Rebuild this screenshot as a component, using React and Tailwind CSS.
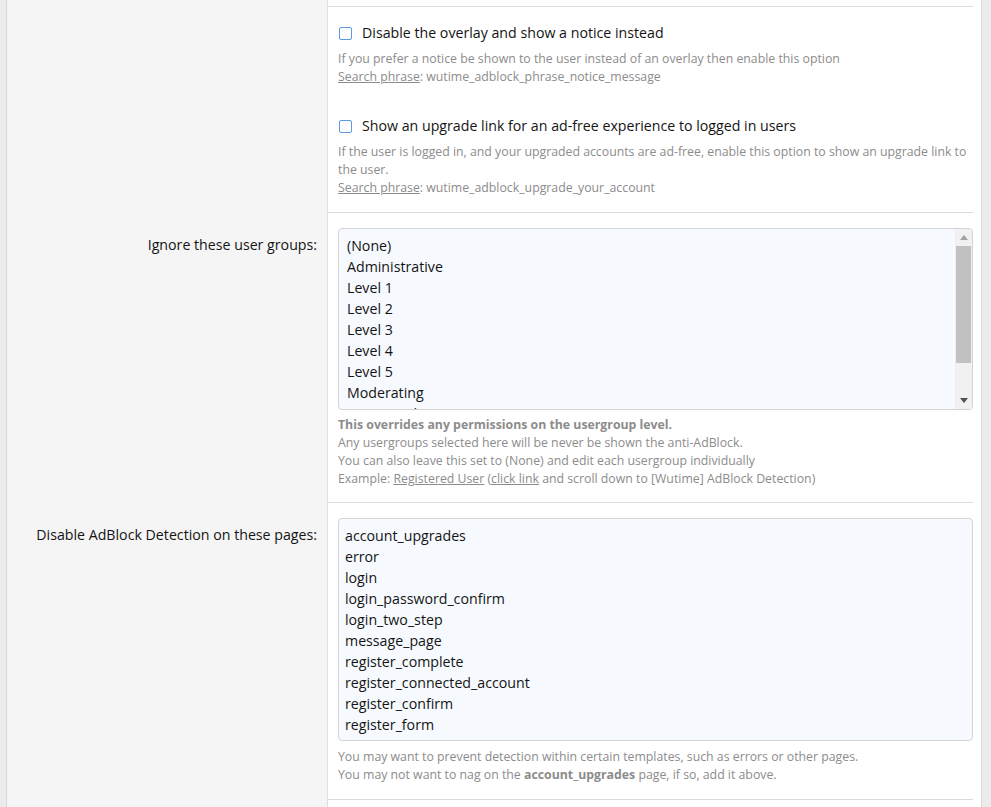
import React from 'react';

const groups = ['(None)', 'Administrative', 'Level 1', 'Level 2', 'Level 3', 'Level 4', 'Level 5', 'Moderating', 'Registered'];

const pages = [
    'account_upgrades',
    'error',
    'login',
    'login_password_confirm',
    'login_two_step',
    'message_page',
    'register_complete',
    'register_connected_account',
    'register_confirm',
    'register_form',
];

function Checkbox({ label, children }) {
    return (
        <div>
            <label className="flex items-center leading-[20px] text-[14.2px] text-[#141414]">
                <span className="w-[13px] h-[13px] border-[1.5px] border-[#5b9be0] rounded-[2px] bg-white ml-[1px] mr-[10px] shrink-0"></span>
                {label}
            </label>
            <div className="mt-[7px] text-[12.3px] leading-[18px] text-[#8c8c8c]">{children}</div>
        </div>
    );
}

function Row({ label, children, className = '' }) {
    return (
        <div className="flex">
            <div className="w-[321px] shrink-0 bg-[#f5f5f5] border-r border-[#dfdfdf] pr-[10px] text-right text-[14.2px] leading-[20px] text-[#141414] pt-[23px]">
                {label}
            </div>
            <div className={`flex-1 mr-[8px] border-t border-[#dcdcdc] pl-[10px] ${className}`}>{children}</div>
        </div>
    );
}

export default function App() {
    return (
        <div className="min-h-screen bg-[#ececec] pl-[6px] pr-[9px]" style={{ fontFamily: '"Open Sans", "Noto Sans", sans-serif' }}>
            <div className="min-h-screen flex flex-col border-l border-r border-[#d8d8d8] bg-white">
                {/* top spacer */}
                <div className="flex h-[6px]">
                    <div className="w-[321px] bg-[#f5f5f5] border-r border-[#dfdfdf]"></div>
                    <div className="flex-1"></div>
                </div>

                {/* Checkbox options */}
                <div className="flex">
                    <div className="w-[321px] shrink-0 bg-[#f5f5f5] border-r border-[#dfdfdf]"></div>
                    <div className="flex-1 mr-[8px] border-t border-[#dcdcdc] pl-[10px] pt-[16px] pb-[15px]">
                        <Checkbox label="Disable the overlay and show a notice instead">
                            If you prefer a notice be shown to the user instead of an overlay then enable this option
                            <br />
                            <span className="underline">Search phrase</span>: wutime_adblock_phrase_notice_message
                        </Checkbox>
                        <div className="mt-[30px]">
                            <Checkbox label="Show an upgrade link for an ad-free experience to logged in users">
                                <span className="whitespace-nowrap">
                                    If the user is logged in, and your upgraded accounts are ad-free, enable this option to show an upgrade link to
                                </span>
                                <br />
                                the user.
                                <br />
                                <span className="underline">Search phrase</span>: wutime_adblock_upgrade_your_account
                            </Checkbox>
                        </div>
                    </div>
                </div>

                {/* User groups */}
                <Row label="Ignore these user groups:" className="pt-[15px] pb-[14px]">
                    <div className="h-[182px] flex border border-[#d4d4d4] rounded-[4px] bg-[#f6fafe] overflow-hidden">
                        <div className="flex-1 pl-[8px] pt-[6px] text-[14.2px] leading-[21px] text-[#141414] overflow-hidden">
                            {groups.map((g) => (
                                <div key={g}>{g}</div>
                            ))}
                        </div>
                        <div className="w-[17px] bg-[#f1f1f1] flex flex-col items-center">
                            <div className="h-[17px] flex items-center justify-center">
                                <svg width="8" height="5" viewBox="0 0 8 5"><path d="M0 5 L4 0 L8 5 Z" fill="#a3a3a3" /></svg>
                            </div>
                            <div className="w-[15px] h-[117px] bg-[#c1c1c1]"></div>
                            <div className="flex-1"></div>
                            <div className="h-[17px] flex items-center justify-center">
                                <svg width="8" height="5" viewBox="0 0 8 5"><path d="M0 0 L8 0 L4 5 Z" fill="#505050" /></svg>
                            </div>
                        </div>
                    </div>
                    <div className="mt-[6px] text-[12.3px] leading-[18px] text-[#8c8c8c]">
                        <div className="font-bold">This overrides any permissions on the usergroup level.</div>
                        <div>Any usergroups selected here will be never be shown the anti-AdBlock.</div>
                        <div>You can also leave this set to (None) and edit each usergroup individually</div>
                        <div>
                            Example: <span className="underline">Registered User</span> (<span className="underline">click link</span> and scroll down to [Wutime] AdBlock Detection)
                        </div>
                    </div>
                </Row>

                {/* Pages */}
                <Row label="Disable AdBlock Detection on these pages:" className="pt-[15px] pb-[15px]">
                    <div className="h-[223px] border border-[#d4d4d4] rounded-[4px] bg-[#f6fafe] pl-[6px] pt-[6px] text-[14.2px] leading-[21px] text-[#141414] overflow-hidden">
                        {pages.map((p) => (
                            <div key={p}>{p}</div>
                        ))}
                    </div>
                    <div className="mt-[7px] text-[12.3px] leading-[18px] text-[#8c8c8c]">
                        <div>You may want to prevent detection within certain templates, such as errors or other pages.</div>
                        <div>
                            You may not want to nag on the <span className="font-bold">account_upgrades</span> page, if so, add it above.
                        </div>
                    </div>
                </Row>

                <Row label="" className="flex-1 min-h-[40px]">
                    <div></div>
                </Row>
            </div>
        </div>
    );
}
